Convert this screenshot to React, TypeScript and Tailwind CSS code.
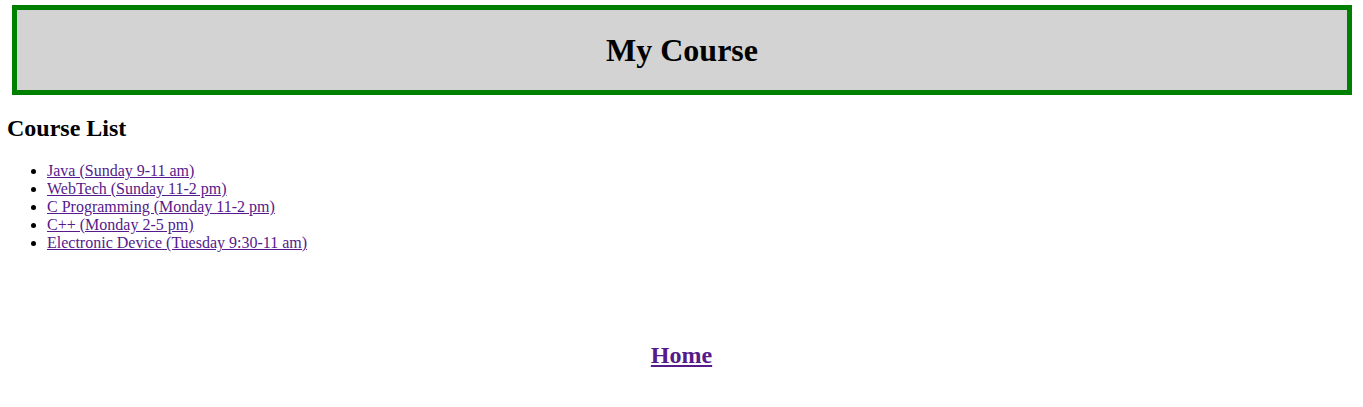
import React from "react";

const courses = [
  "Java (Sunday 9-11 am)",
  "WebTech (Sunday 11-2 pm)",
  "C Programming (Monday 11-2 pm)",
  "C++ (Monday 2-5 pm)",
  "Electronic Device (Tuesday 9:30-11 am)",
];

export default function App() {
  return (
    <div className="min-h-[407px] bg-white text-black pt-[5px] pb-[20px]" style={{ fontFamily: '"Liberation Serif", "Times New Roman", serif' }}>
      <div className="ml-[12px] mr-[11px] border-[5px] border-[#008000] bg-[#d3d3d3]">
        <h1 className="text-center text-[32px] font-bold leading-[37px] py-[21.5px]">My Course</h1>
      </div>
      <h2 className="ml-[7px] mt-[19px] text-[24px] font-bold leading-[28px]">Course List</h2>
      <ul className="ml-[7px] mt-[20px] pl-[40px] list-disc text-[16px] leading-[18px]">
        {courses.map((c) => (
          <li key={c}>
            <a href="#" className="text-[#551a8b] underline">
              {c}
            </a>
          </li>
        ))}
      </ul>
      <div className="mt-[89px] text-center">
        <a href="#" className="text-[24px] font-bold leading-[28px] text-[#551a8b] underline">
          Home
        </a>
      </div>
    </div>
  );
}
